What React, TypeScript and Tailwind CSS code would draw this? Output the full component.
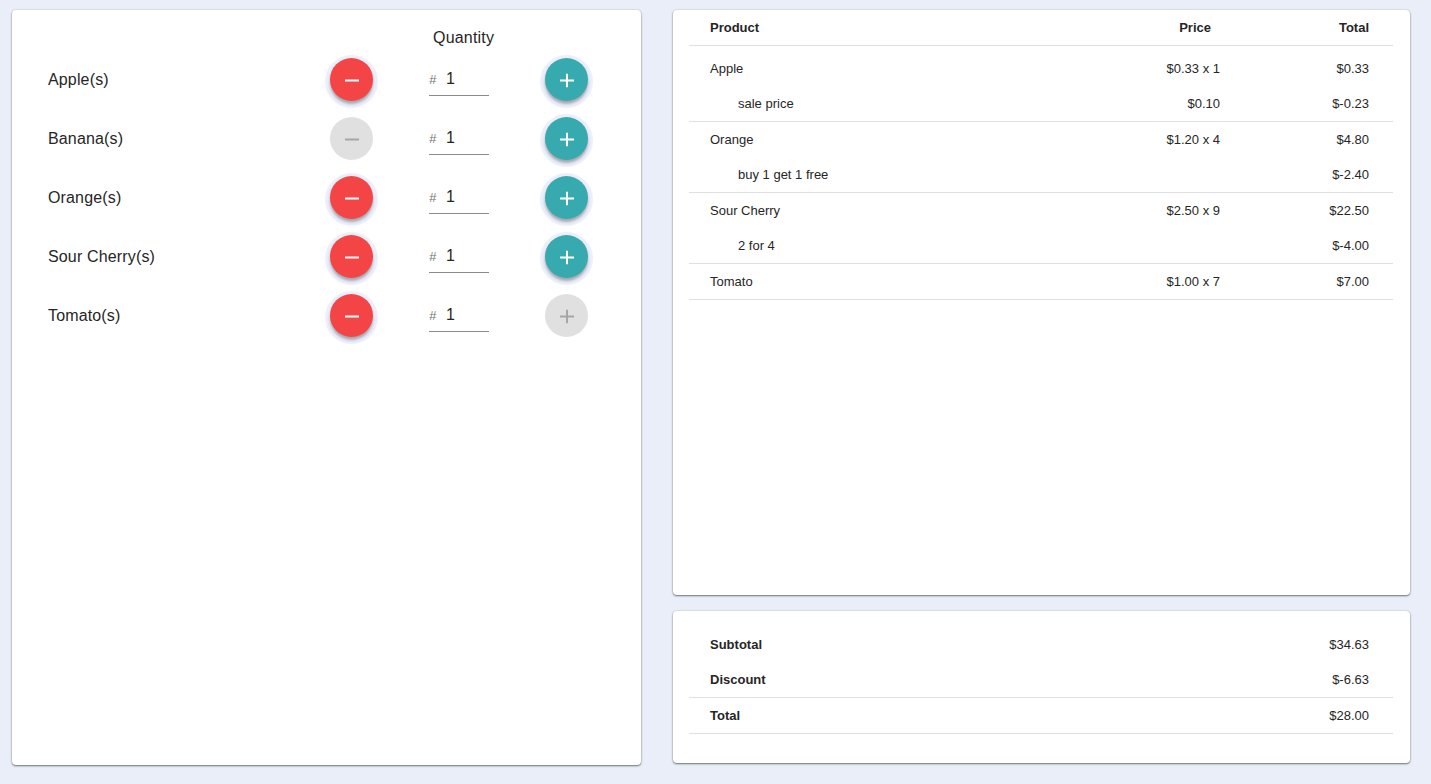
const fruits = [
  { name: 'Apple(s)', canRemove: true, canAdd: true },
  { name: 'Banana(s)', canRemove: false, canAdd: true },
  { name: 'Orange(s)', canRemove: true, canAdd: true },
  { name: 'Sour Cherry(s)', canRemove: true, canAdd: true },
  { name: 'Tomato(s)', canRemove: true, canAdd: false },
];

const lines = [
  { product: 'Apple', price: '$0.33 x 1', total: '$0.33', discount: 'sale price', discountPrice: '$0.10', discountTotal: '$-0.23' },
  { product: 'Orange', price: '$1.20 x 4', total: '$4.80', discount: 'buy 1 get 1 free', discountPrice: '', discountTotal: '$-2.40' },
  { product: 'Sour Cherry', price: '$2.50 x 9', total: '$22.50', discount: '2 for 4', discountPrice: '', discountTotal: '$-4.00' },
  { product: 'Tomato', price: '$1.00 x 7', total: '$7.00' },
];

function RoundButton({ kind, enabled }: { kind: 'minus' | 'plus'; enabled: boolean }) {
  const color = kind === 'minus' ? 'bg-[#f44546]' : 'bg-[#37aab0]';
  return (
    <button
      className={
        enabled
          ? `w-[43px] h-[43px] rounded-full flex items-center justify-center text-white shadow-[0_3px_3px_rgba(0,0,0,0.3),0_2px_1px_5px_#eceffa] ${color}`
          : 'w-[43px] h-[43px] rounded-full flex items-center justify-center text-[#a6a6a6] bg-[#e0e0e0]'
      }
    >
      <svg width="14" height="14" viewBox="0 0 14 14" fill="none" stroke="currentColor" strokeWidth="2" className="translate-y-[0.5px]">
        <path d="M0 7H14" />
        {kind === 'plus' && <path d="M7 0V14" />}
      </svg>
    </button>
  );
}

function FruitRow({ name, canRemove, canAdd }: { name: string; canRemove: boolean; canAdd: boolean }) {
  return (
    <div className="flex items-center h-[43px]">
      <div className="w-[282px] text-base tracking-[0.15px]">{name}</div>
      <RoundButton kind="minus" enabled={canRemove} />
      <div className="ml-[56px] w-[60px] h-[34px] mt-[-1px] border-b border-[#8c8c8c] flex items-start pt-[7px]">
        <span className="text-[13px] italic text-[#757575] w-[17px] leading-[20px] mt-[1px]">#</span>
        <span className="text-base leading-[20px]">1</span>
      </div>
      <div className="ml-[56px]">
        <RoundButton kind="plus" enabled={canAdd} />
      </div>
    </div>
  );
}

function TableRow({ first, second, third, indent, bold, secondClass }: { first: string; second?: string; third: string; indent?: boolean; bold?: boolean; secondClass?: string }) {
  return (
    <div className={`flex items-center h-[35px] pl-[21px] pr-[24px] ${bold ? 'font-bold' : ''}`}>
      <div className={`flex-1 ${indent ? 'pl-[28px]' : ''}`}>{first}</div>
      <div className={`w-[120px] text-right ${secondClass ?? ''}`}>{second}</div>
      <div className="w-[149px] text-right">{third}</div>
    </div>
  );
}

export default function App() {
  return (
    <div className="min-h-[784px] bg-[#eaeef8] flex gap-[32px] pt-[10px] pl-[12px] pr-[21px] font-['Liberation_Sans',Arial,sans-serif] text-[#262626]">
      {/* Quantity picker */}
      <div className="w-[629px] h-[755px] bg-white rounded-[4px] shadow-[0_1px_2px_rgba(0,0,0,0.5),0_0_2px_rgba(0,0,0,0.15)] pl-[36px]">
        <div className="h-[48px] pl-[385px] pt-[18px] text-base leading-[20px] tracking-[0.2px]">Quantity</div>
        <div className="flex flex-col gap-[16px]">
          {fruits.map((f) => (
            <FruitRow key={f.name} {...f} />
          ))}
        </div>
      </div>

      <div className="w-[737px] flex flex-col gap-[16px]">
        {/* Cart lines */}
        <div className="h-[585px] bg-white rounded-[4px] shadow-[0_1px_2px_rgba(0,0,0,0.5),0_0_2px_rgba(0,0,0,0.15)] pl-[16px] pr-[17px] text-[13px]">
          <div className="border-b border-[#e0e0e0] h-[36px]">
            <TableRow first="Product" second="Price" third="Total" bold secondClass="pr-[9px]" />
          </div>
          <div className="h-[5px]" />
          {lines.map((l) => (
            <div key={l.product} className="border-b border-[#e0e0e0]">
              <TableRow first={l.product} second={l.price} third={l.total} />
              {l.discount && <TableRow first={l.discount} second={l.discountPrice} third={l.discountTotal} indent />}
            </div>
          ))}
        </div>

        {/* Totals */}
        <div className="h-[152px] bg-white rounded-[4px] shadow-[0_1px_2px_rgba(0,0,0,0.5),0_0_2px_rgba(0,0,0,0.15)] pl-[16px] pr-[17px] pt-[16px] text-[13px]">
          <div className="border-b border-[#e0e0e0]">
            <div className="flex items-center h-[35px] pl-[21px] pr-[24px]">
              <div className="flex-1 font-bold">Subtotal</div>
              <div>$34.63</div>
            </div>
            <div className="flex items-center h-[35px] pl-[21px] pr-[24px]">
              <div className="flex-1 font-bold">Discount</div>
              <div>$-6.63</div>
            </div>
          </div>
          <div className="border-b border-[#e0e0e0] flex items-center h-[36px] pl-[21px] pr-[24px]">
            <div className="flex-1 font-bold">Total</div>
            <div>$28.00</div>
          </div>
        </div>
      </div>
    </div>
  );
}
